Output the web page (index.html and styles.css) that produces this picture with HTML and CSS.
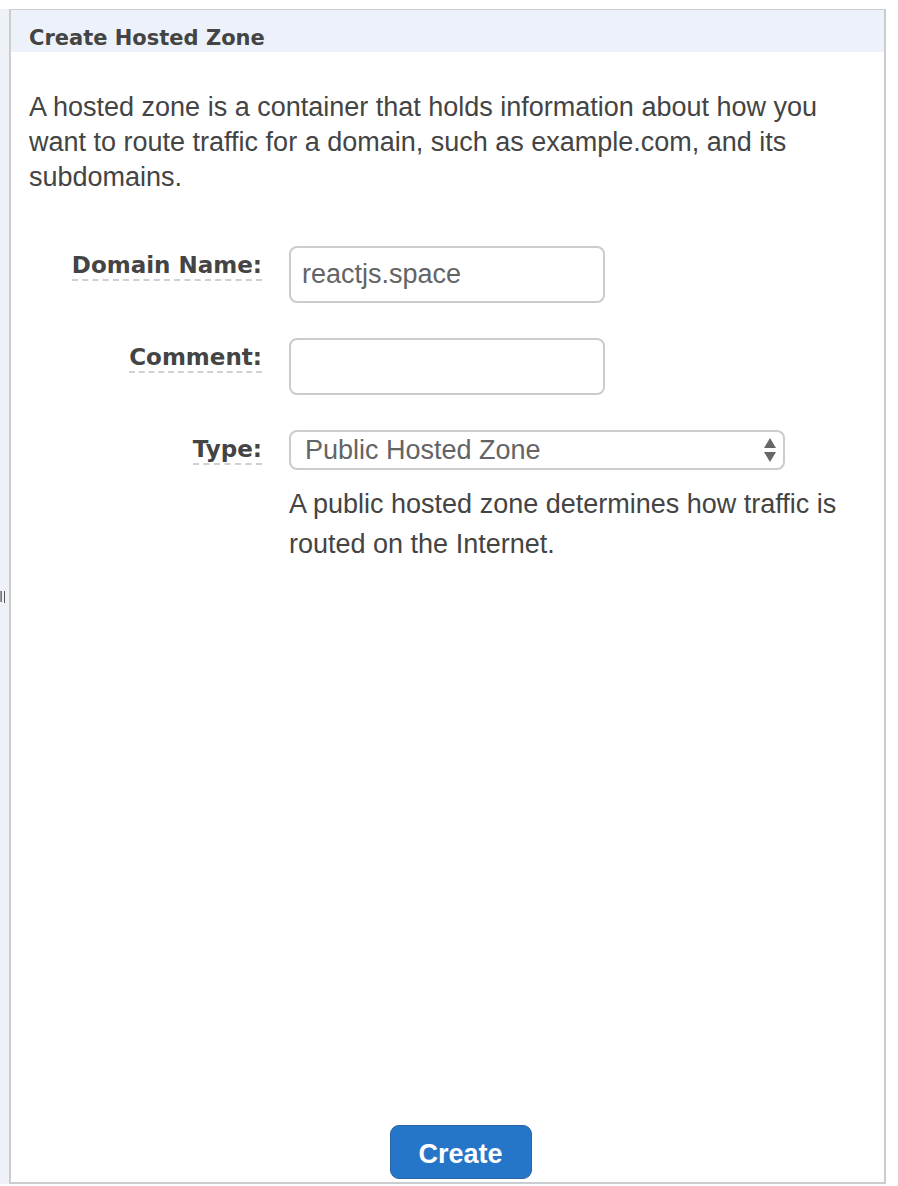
FILE: index.html
```
<!DOCTYPE html>
<html lang="en">
<head>
<meta charset="utf-8">
<title>Create Hosted Zone</title>
<link rel="stylesheet" href="styles.css">
</head>
<body>
<div class="page">
  <div class="splitter">
    <svg class="grip" width="6" height="14" viewBox="0 0 6 14" aria-hidden="true">
      <path d="M0 1h1v11H0z" fill="#96989b"/>
      <path d="M1 1h1v11H1z" fill="#77797c"/>
      <path d="M4 1h1v12H4z" fill="#555659"/>
    </svg>
  </div>
  <form class="panel">
    <h1 class="panel-title">Create Hosted Zone</h1>
    <div class="panel-body">
      <p class="intro">A hosted zone is a container that holds information about how you want to route traffic for a domain, such as example.com, and its subdomains.</p>
      <div class="fields">
        <div class="label-cell"><label class="label" for="domain">Domain Name:</label></div>
        <input class="control" id="domain" type="text" value="reactjs.space">
        <div class="label-cell"><label class="label" for="comment">Comment:</label></div>
        <input class="control" id="comment" type="text">
        <div class="label-cell"><label class="label" for="type">Type:</label></div>
        <div class="type-cell">
          <div class="select-wrap">
            <select class="control select" id="type"><option>Public Hosted Zone</option></select>
            <svg class="arrows" width="12" height="24" viewBox="0 0 12 24" aria-hidden="true">
              <path d="M6 0l6 10H0zM0 14h12L6 24z" fill="#666769"/>
            </svg>
          </div>
          <p class="hint">A public hosted zone determines how traffic is routed on the Internet.</p>
        </div>
      </div>
    </div>
    <div class="actions"><button class="create" type="button">Create</button></div>
  </form>
</div>
</body>
</html>
```
FILE: styles.css
```
* { box-sizing: border-box; }
body {
  margin: 0;
  background: #fff;
  color: #444;
  font-family: "Liberation Sans", Arial, sans-serif;
  font-size: 27px;
}
.page {
  display: flex;
  min-height: 100vh;
  padding: 9px 12px 2px 0;
}
.splitter {
  display: flex;
  align-items: center;
  width: 9px;
  background: #eef1f5;
}
.grip { display: block; }
.panel {
  display: flex;
  flex: 1;
  flex-direction: column;
  min-width: 0;
  border: 2px solid #cbcccf;
  border-top-width: 1px;
}
.panel-title {
  margin: 0;
  padding: 15px 18px 1px;
  background: #edf2fa;
  font: bold 21px/26px "DejaVu Sans", Verdana, sans-serif;
}
.panel-body {
  flex: 1;
  padding: 38px 24px 0 18px;
}
.intro {
  margin: 0 0 51px;
  line-height: 35px;
}
.fields {
  display: grid;
  grid-template-columns: 233px 1fr;
  gap: 35px 27px;
}
.label-cell {
  padding-top: 3px;
  text-align: right;
}
.label {
  display: inline-block;
  border-bottom: 2px dashed #cdd0d4;
  font: bold 23px/28px "DejaVu Sans", Verdana, sans-serif;
}
.control {
  width: 316px;
  max-width: 100%;
  height: 57px;
  padding: 0 11px;
  border: 2px solid #cbcccf;
  border-radius: 8px;
  background: #fff;
  color: #636466;
  font: inherit;
}
.select-wrap {
  position: relative;
  width: 496px;
  max-width: 100%;
}
.select {
  display: block;
  width: 100%;
  height: 40px;
  padding: 0 36px 0 14px;
  appearance: none;
}
.arrows {
  position: absolute;
  top: 8px;
  right: 9px;
  pointer-events: none;
}
.hint {
  margin: 14px 0 0;
  line-height: 40px;
}
.actions {
  display: flex;
  justify-content: center;
  padding: 0 0 3px 26px;
}
.create {
  width: 142px;
  height: 54px;
  padding: 4px 0 0;
  border: 1px solid #2c649f;
  border-radius: 9px;
  background: #2575c9;
  color: #fff;
  font: bold 27px/32px "Liberation Sans", Arial, sans-serif;
}
```
